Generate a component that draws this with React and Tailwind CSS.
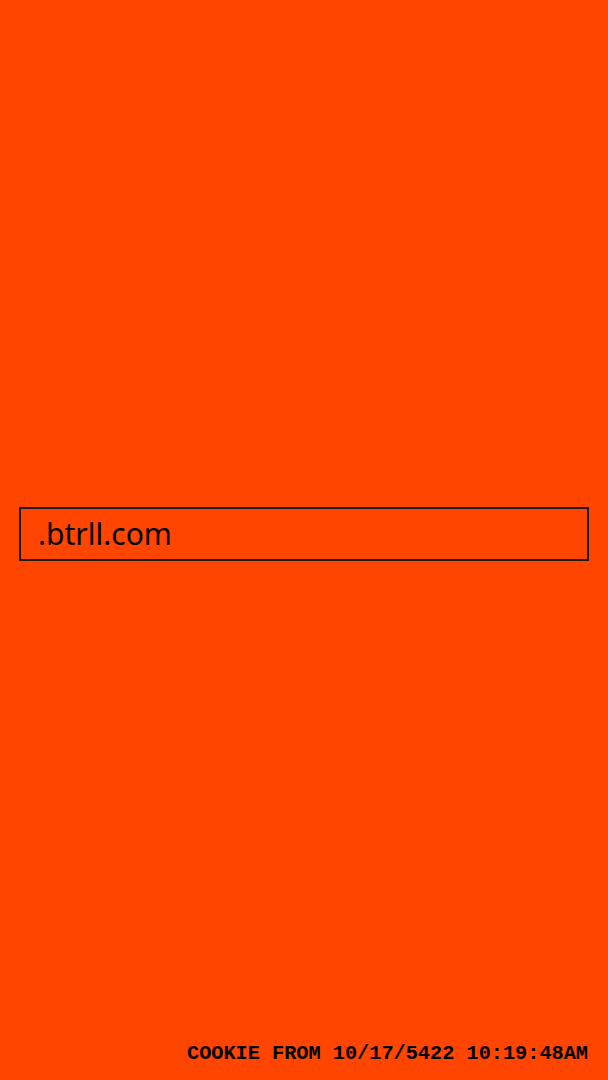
export default function App() {
  return (
    <div className="h-screen w-full bg-[#ff4500] flex flex-col text-black">
      <div className="flex-1 flex items-center px-[19px]">
        <div className="w-full h-[54px] border-2 border-[#1a1a1a] flex items-center pl-[17px] mt-[25px]">
          <span className="text-[30px] leading-none" style={{ fontFamily: '"Noto Sans", sans-serif' }}>.btrll.com</span>
        </div>
      </div>
      <div className="flex justify-end px-[20px] pb-[16px]">
        <span className="text-[20.25px] font-bold leading-none" style={{ fontFamily: '"Liberation Mono", monospace' }}>COOKIE FROM 10/17/5422 10:19:48AM</span>
      </div>
    </div>
  );
}
